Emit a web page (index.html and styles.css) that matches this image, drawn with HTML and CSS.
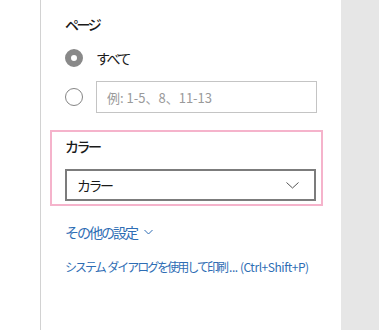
FILE: index.html
```html
<!DOCTYPE html>
<html lang="ja">
<head>
  <meta charset="UTF-8" />
  <meta name="viewport" content="width=device-width, initial-scale=1.0"/>
  <title>印刷</title>
  <link rel="stylesheet" href="styles.css">
</head>
<body>
  <div class="gutter"></div>

  <div class="panel">
    <p class="section-title">ページ</p>

    <div class="radio-row">
      <span class="radio checked"></span>
      <span class="radio-label">すべて</span>
    </div>
    <div class="radio-row">
      <span class="radio"></span>
      <input class="range-input" type="text" placeholder="例: 1-5、8、11-13">
    </div>

    <div class="color-box">
      <p class="section-title">カラー</p>
      <div class="select">
        <span class="select-value">カラー</span>
        <svg width="13" height="7" viewBox="0 0 13 7">
          <path d="M0.5 0.5 L6.5 6 L12.5 0.5" fill="none" stroke="#555" stroke-width="1"/>
        </svg>
      </div>
    </div>

    <a class="more-link" href="#"><span class="jp">その他の設定</span>
      <svg width="9" height="6" viewBox="0 0 9 6">
        <path d="M0.5 1 L4.5 5 L8.5 1" fill="none" stroke="#2e6db4" stroke-width="1"/>
      </svg>
    </a>

    <a class="system-link" href="#"><span class="jp">システム</span> <span class="jp">ダイアログを使用して印刷</span><span class="latin">... (Ctrl+Shift+P)</span></a>
  </div>

  <div class="aside"></div>
</body>
</html>
```

FILE: styles.css
```css
body {
  margin: 0;
  display: flex;
  height: 330px;
  background-color: #fff;
  font-family: "Noto Sans CJK JP", "Noto Sans", sans-serif;
  color: #1a1a1a;
  overflow: hidden;
}

.gutter {
  width: 40px;
}

.panel {
  width: 276px;
  border-left: 1px solid #d2d2d2;
  padding: 14px 0 0 24px;
  display: flex;
  flex-direction: column;
  align-items: flex-start;
}

.aside {
  flex: 1;
  background-color: #e6e6e6;
}

.section-title {
  margin: 0;
  font-size: 14px;
  line-height: 20px;
  font-weight: 500;
  letter-spacing: -2.5px;
}

.radio-row {
  display: flex;
  align-items: center;
  gap: 13px;
  height: 32px;
  margin-top: 7px;
}

.radio-row:first-of-type {
  margin-top: 8px;
}

.radio {
  width: 18px;
  height: 18px;
  box-sizing: border-box;
  border: 1px solid #858585;
  border-radius: 50%;
  background-color: #fff;
}

.radio.checked {
  border: 6px solid #898989;
}

.radio-label {
  font-size: 14px;
  letter-spacing: -2.5px;
}

.range-input {
  width: 221px;
  height: 32px;
  box-sizing: border-box;
  border: 1px solid #c4c4c4;
  padding: 0 10px;
  font-family: inherit;
  font-size: 13px;
}

.range-input::placeholder {
  color: #9a9a9a;
}

.color-box {
  margin: 17px 0 0 -15px;
  width: 273px;
  box-sizing: border-box;
  border: 2px solid #f5b3cb;
  padding: 4px 5px 3px 13px;
}

.select {
  margin-top: 13px;
  height: 32px;
  box-sizing: border-box;
  border: 2px solid #7c7c7c;
  display: flex;
  align-items: center;
  justify-content: space-between;
  padding: 0 15px 0 10px;
  font-size: 14px;
}

.select-value {
  letter-spacing: -2.5px;
}

.more-link {
  margin-top: 16px;
  font-size: 14px;
  line-height: 20px;
  color: #2e6db4;
  text-decoration: none;
  display: flex;
  align-items: center;
  gap: 7px;
}

.more-link .jp {
  letter-spacing: -2px;
}

.system-link {
  margin-top: 16px;
  font-size: 12px;
  line-height: 18px;
  color: #2e6db4;
  text-decoration: none;
  white-space: nowrap;
}

.system-link .jp {
  letter-spacing: -2px;
}

.system-link .latin {
  margin-left: 2px;
  letter-spacing: -0.45px;
}
```
